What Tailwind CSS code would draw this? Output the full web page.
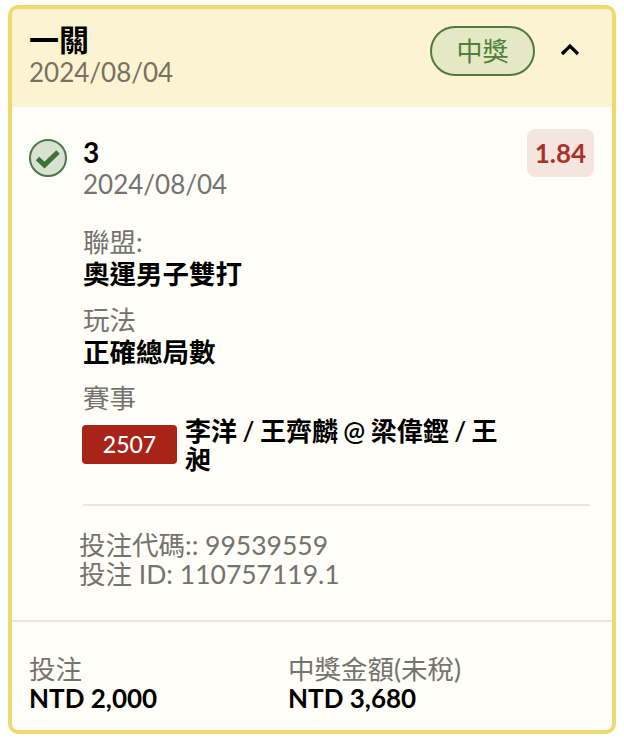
<!DOCTYPE html>
<html><head><meta charset="utf-8"><script src="https://cdn.jsdelivr.net/npm/@tailwindcss/browser@4"></script></head>
<body class="bg-white">
<div class="w-[624px] h-[745px] pt-[5px] pl-[8px] font-['Lato','Noto_Sans_CJK_TC',sans-serif]">
<div class="w-[608px] h-[729px] border-[4px] border-[#f0d96f] rounded-[10px] bg-[#fffef8] overflow-hidden flex flex-col">
  <div class="h-[98px] shrink-0 bg-[#fcf3d2] flex items-start justify-between pl-[17px] pr-[32px]">
    <div class="pt-[13px]">
      <div class="text-[30px] leading-[34px] font-bold text-black">一關</div>
      <div class="text-[26px] leading-[30px] text-[#77725f] mt-[1px]">2024/08/04</div>
    </div>
    <div class="flex items-center gap-[25px] pt-[17px]">
      <div class="w-[105px] h-[50px] rounded-full border-2 border-[#4f7a3a] bg-[#e4e8c4] text-[#4f7f3a] text-[26px] flex items-center justify-center">中獎</div>
      <svg class="-mt-[4px]" width="20" height="14" viewBox="0 0 20 14" fill="none"><path d="M2 12 L10 4 L18 12" stroke="#000" stroke-width="3.2"/></svg>
    </div>
  </div>
  <div class="flex-1 flex flex-col">
    <div class="h-[515px] shrink-0 border-b-2 border-[#e9e8e0] pl-[17px] pr-[18px] pt-[24px]">
      <div class="flex items-start justify-between">
        <div class="flex gap-[16px]">
          <svg class="mt-[8px]" width="38" height="38" viewBox="0 0 38 38" fill="none"><circle cx="19" cy="19" r="18" fill="#d8e2d2" stroke="#4a7a45" stroke-width="2"/><path d="M8.5 19.5 L15.5 26 L29 13" stroke="#3b7434" stroke-width="5"/></svg>
          <div class="w-[440px]">
            <div class="text-[28px] leading-[32px] font-bold text-black pt-[5px]">3</div>
            <div class="text-[26px] leading-[30px] text-[#737370] mt-[1px]">2024/08/04</div>
            <div class="text-[26.5px] leading-[30px] text-[#737370] mt-[28px]">聯盟:</div>
            <div class="text-[26.5px] leading-[32px] font-semibold text-black mt-[1px]">奧運男子雙打</div>
            <div class="text-[26.5px] leading-[30px] text-[#737370] mt-[15px]">玩法</div>
            <div class="text-[26.5px] leading-[32px] font-semibold text-black mt-[1px]">正確總局數</div>
            <div class="text-[26.5px] leading-[30px] text-[#737370] mt-[15px]">賽事</div>
            <div class="flex items-start gap-[8px] mt-[4px] -ml-[1px]">
              <div class="w-[95px] h-[39px] mt-[8px] shrink-0 rounded-[4px] bg-[#a82318] text-white text-[23px] font-medium flex items-center justify-center">2507</div>
              <div class="w-[316px] text-[26px] leading-[28px] font-semibold text-black [word-spacing:-1px]">李洋 / 王齊麟 @ 梁偉鏗 / 王昶</div>
            </div>
          </div>
        </div>
        <div class="w-[67px] h-[48px] rounded-[8px] bg-[#f4e6df] text-[#a8322a] text-[26px] font-bold flex items-center justify-center -mt-[2px]">1.84</div>
      </div>
      <div class="h-[2px] bg-[#e9e8e0] ml-[54px] mr-[4px] mt-[31px]"></div>
      <div class="ml-[50px] mt-[25px] text-[26.5px] leading-[29px] text-[#737370]">
        <div>投注代碼:: 99539559</div>
        <div>投注 ID: 110757119.1</div>
      </div>
    </div>
    <div class="grid grid-cols-[259px_1fr] pl-[17px] pt-[33px]">
      <div>
        <div class="text-[26.5px] leading-[29px] text-[#737370]">投注</div>
        <div class="text-[26px] leading-[28px] font-bold text-black">NTD 2,000</div>
      </div>
      <div>
        <div class="text-[26.5px] leading-[29px] text-[#737370]">中獎金額(未稅)</div>
        <div class="text-[26px] leading-[28px] font-bold text-black">NTD 3,680</div>
      </div>
    </div>
  </div>
</div>
</div>
</body></html>
